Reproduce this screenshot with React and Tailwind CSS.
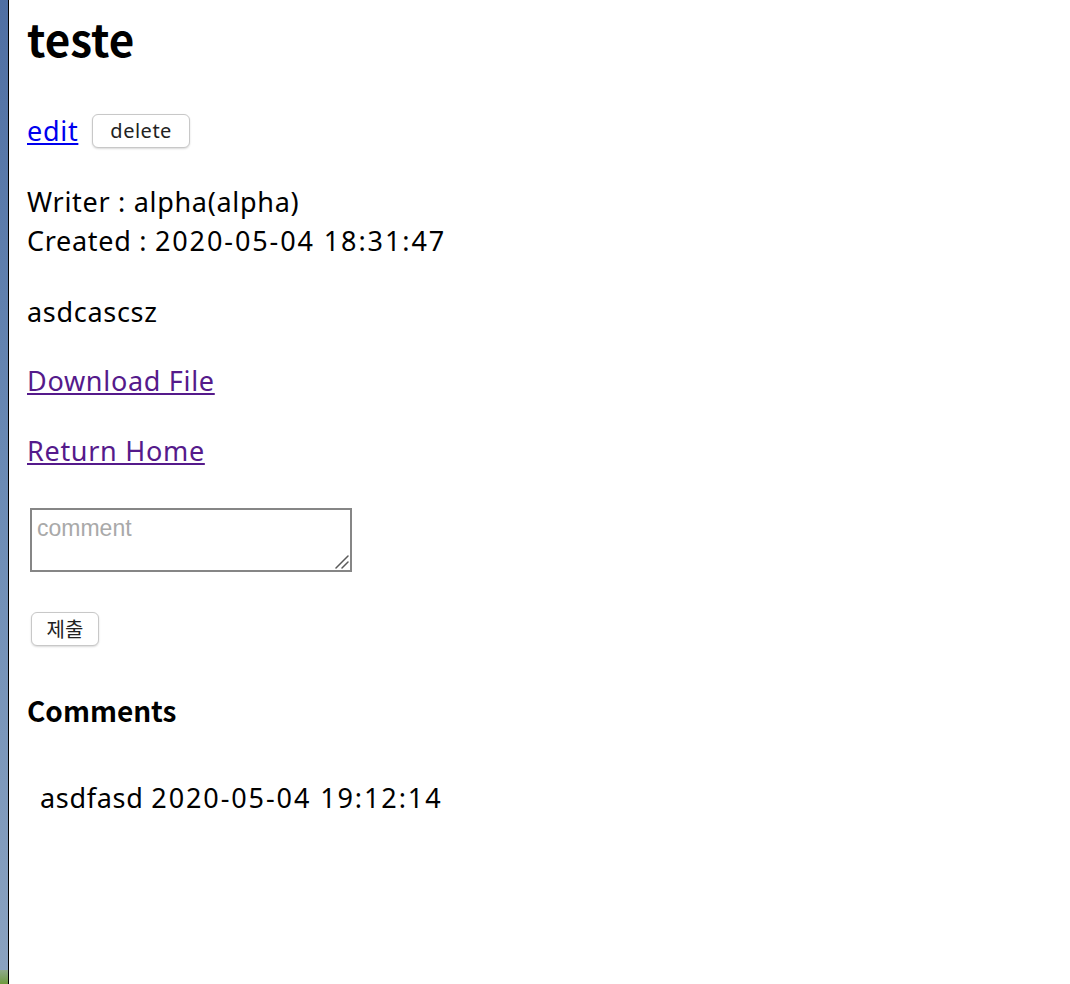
const body = { fontFamily: '"Noto Sans", "Noto Sans CJK KR", sans-serif' };
const heading = { fontFamily: '"Noto Sans CJK KR", "Noto Sans", sans-serif' };

const Stamp = ({ children }) => <span className="tracking-[1.9px]">{children}</span>;

const App = () => {
  return (
    <div className="flex min-h-[984px] bg-white text-black" style={body}>
      <div className="w-[8px] shrink-0 flex flex-col">
        <div className="flex-1 bg-gradient-to-b from-[#4f6fa3] via-[#6b8bb5] to-[#8aa2c0]" />
        <div className="h-[14px] bg-gradient-to-b from-[#8fa98a] to-[#6f9a3c]" />
      </div>
      <div className="w-[1px] shrink-0 bg-black" />
      <main className="flex-1 pl-[18px] tracking-[0.7px]">
        <h1 className="mt-[10px] text-[44px] leading-[56px] font-bold tracking-normal" style={heading}>
          teste
        </h1>

        <div className="mt-[48px] flex items-center gap-[14px] h-[34px]">
          <a href="#" className="text-[27px] text-[#0000ee] underline leading-[34px]">
            edit
          </a>
          <button className="h-[34px] px-[17px] rounded-[6px] border border-[#c8c8c8] bg-white shadow-[0_1px_2px_rgba(0,0,0,0.15)] text-[20px] text-[#222] leading-none tracking-[0.5px]">
            delete
          </button>
        </div>

        <div className="mt-[34px] text-[27px] leading-[39px]">
          <div>Writer : alpha(alpha)</div>
          <div>
            Created : <Stamp>2020-05-04 18:31:47</Stamp>
          </div>
        </div>

        <p className="mt-[32px] text-[27px] leading-[39px]">asdcascsz</p>

        <p className="mt-[30px] text-[27px] leading-[39px]">
          <a href="#" className="text-[#551a8b] underline">Download File</a>
        </p>

        <p className="mt-[31px] text-[27px] leading-[39px]">
          <a href="#" className="text-[#551a8b] underline">Return Home</a>
        </p>

        <form className="pl-[3px] tracking-normal">
          <div className="relative mt-[38px] w-[322px] h-[64px]">
            <textarea
              placeholder="comment"
              className="block w-full h-full resize-none border-2 border-[#868686] px-[5px] py-[4px] text-[23px] leading-[28px] placeholder:text-[#a9a9a9]"
              style={{ fontFamily: '"Liberation Sans", Arial, sans-serif' }}
            />
            <svg
              className="absolute right-[3px] bottom-[3px] pointer-events-none"
              width="14"
              height="14"
              viewBox="0 0 14 14"
            >
              <path d="M1 13 L13 1 M7 13 L13 7" stroke="#5a5a5a" strokeWidth="1.5" strokeLinecap="round" />
            </svg>
          </div>
          <button
            type="button"
            className="mt-[40px] block h-[34px] w-[68px] ml-[1px] rounded-[6px] border border-[#c8c8c8] bg-white shadow-[0_1px_2px_rgba(0,0,0,0.15)] text-[20px] text-[#222] leading-none"
            style={heading}
          >
            제출
          </button>
        </form>

        <h3 className="mt-[47px] text-[28px] leading-[34px] font-bold tracking-normal" style={heading}>
          Comments
        </h3>

        <div className="mt-[51px] pl-[13px] text-[27px] leading-[39px]">
          asdfasd <Stamp>2020-05-04 19:12:14</Stamp>
        </div>
      </main>
    </div>
  );
};

export default App;
